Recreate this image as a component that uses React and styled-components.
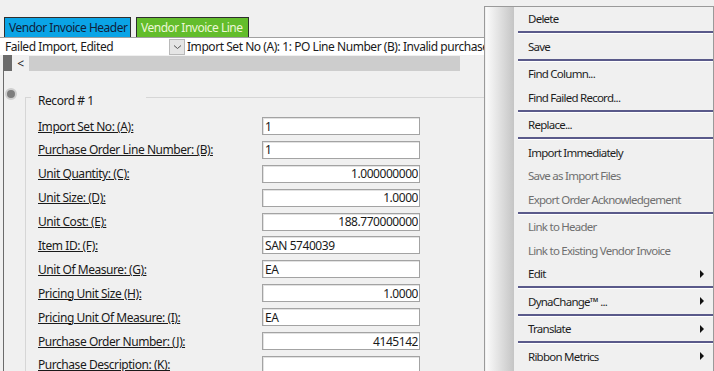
import React from "react";
import styled, { createGlobalStyle } from "styled-components";

const GlobalStyle = createGlobalStyle`
  html, body {
    margin: 0;
    padding: 0;
    background: #f0f0f0;
  }
  body {
    font-family: "Noto Sans", "Liberation Sans", sans-serif;
    font-size: 12px;
    color: #1a1a1a;
  }
`;

const Screen = styled.div`
  position: relative;
  width: 714px;
  height: 371px;
  overflow: hidden;
  letter-spacing: -0.45px;
`;

const TabStrip = styled.div`
  display: flex;
  gap: 5px;
  padding: 17px 0 0 4px;
`;

const Tab = styled.div`
  box-sizing: border-box;
  width: ${(p) => p.$width}px;
  height: 20px;
  padding-left: 4px;
  border: 1px solid #2e2e2e;
  border-bottom: none;
  background: ${(p) => p.$bg};
  color: ${(p) => p.$fg};
  font-size: 12px;
  letter-spacing: -0.5px;
  line-height: 20px;
  white-space: nowrap;
  overflow: hidden;
`;

const Panel = styled.div`
  border-top: 1px solid #a0a0a0;
`;

const FilterRow = styled.div`
  display: flex;
  align-items: center;
  height: 17px;
  padding-left: 3px;
  background: #ffffff;
`;

const Combo = styled.div`
  box-sizing: border-box;
  display: flex;
  align-items: center;
  justify-content: space-between;
  width: 182px;
  height: 17px;
  padding-left: 2px;
  background: #ffffff;
  white-space: nowrap;
`;

const ComboButton = styled.div`
  box-sizing: border-box;
  display: flex;
  align-items: center;
  justify-content: center;
  width: 16px;
  height: 16px;
  background: #e5e5e5;
  border: 1px solid #b9b9b9;
`;

const StatusText = styled.div`
  width: 297px;
  margin-left: 2px;
  white-space: nowrap;
  overflow: hidden;
`;

const ScrollRow = styled.div`
  display: flex;
  align-items: center;
  height: 16px;
  padding-left: 3px;
`;

const ScrollThumb = styled.div`
  width: 9px;
  height: 16px;
  background: #6b6b6b;
`;

const ScrollArrow = styled.div`
  width: 17px;
  text-align: center;
  font-size: 12px;
  color: #222;
`;

const ScrollTrack = styled.div`
  width: 431px;
  height: 15px;
  background: #cdcdcd;
`;

const Body = styled.div`
  display: flex;
  margin-left: 3px;
  height: 300px;
  border-left: 1px solid #6b6b6b;
`;

const RadioCol = styled.div`
  width: 21px;
`;

const Radio = styled.div`
  box-sizing: border-box;
  width: 12px;
  height: 12px;
  margin: 17px 0 0 1px;
  border-radius: 50%;
  background: #7e7e7e;
  border: 2px solid #cfcfcf;
`;

const Group = styled.div`
  flex: 1;
  margin-top: 26px;
  border-top: 1px solid #d6d6d6;
  border-left: 1px solid #d6d6d6;
`;

const GroupTitle = styled.div`
  box-sizing: border-box;
  width: 115px;
  height: 15px;
  margin: -5px 0 0 5px;
  padding-left: 7px;
  background: #f0f0f0;
  line-height: 15px;
`;

const Fields = styled.div`
  display: grid;
  grid-template-columns: 224px 158px;
  grid-auto-rows: 18px;
  row-gap: 5.9px;
  align-items: center;
  padding: 9px 0 0 12px;
`;

const FieldLabel = styled.div`
  text-decoration: underline;
  white-space: nowrap;
`;

const FieldInput = styled.input`
  box-sizing: border-box;
  width: 158px;
  height: 18px;
  padding: 0 1px 0 2px;
  border: 1px solid #a3a3a3;
  box-shadow: inset 1px 1px 0 #e2e2e2;
  background: #ffffff;
  font: inherit;
  letter-spacing: -0.45px;
  color: #1a1a1a;
  text-align: ${(p) => (p.$num ? "right" : "left")};
  outline: none;
`;

const Menu = styled.div`
  position: absolute;
  left: 484px;
  top: 6px;
  width: 228px;
  height: 380px;
  display: flex;
  border: 1px solid #9a9a9a;
  border-bottom: none;
  background: #f0f0f0;
`;

const MenuGutter = styled.div`
  width: 28px;
  margin-left: 1px;
  background: linear-gradient(to right, #fbfbfb, #c5c5c5);
`;

const MenuList = styled.div`
  flex: 1;
  display: flex;
  flex-direction: column;
`;

const MenuItem = styled.div`
  display: flex;
  align-items: center;
  justify-content: space-between;
  height: 23.5px;
  padding: 0 9px 0 14px;
  color: ${(p) => (p.$disabled ? "#6f6f6f" : "#1e1e1e")};
  font-size: 11.5px;
  letter-spacing: -0.75px;
  white-space: nowrap;
`;

const MenuSeparator = styled.div`
  height: 4px;
  margin-left: 4px;
  display: flex;
  flex-direction: column;
  justify-content: center;

  &::before {
    content: "";
    height: 2px;
    background: #5a5a8a;
  }
  &::after {
    content: "";
    height: 1px;
    background: #ffffff;
  }
`;

const SubArrow = styled.span`
  width: 0;
  height: 0;
  border-top: 4px solid transparent;
  border-bottom: 4px solid transparent;
  border-left: 4px solid #111;
`;

const fields = [
  ["Import Set No: (A):", "1", false],
  ["Purchase Order Line Number: (B):", "1", false],
  ["Unit Quantity: (C):", "1.000000000", true],
  ["Unit Size: (D):", "1.0000", true],
  ["Unit Cost: (E):", "188.770000000", true],
  ["Item ID: (F):", "SAN 5740039", false],
  ["Unit Of Measure: (G):", "EA", false],
  ["Pricing Unit Size (H):", "1.0000", true],
  ["Pricing Unit Of Measure: (I):", "EA", false],
  ["Purchase Order Number: (J):", "4145142", true],
  ["Purchase Description: (K):", "", false],
];

const menu = [
  { label: "Delete" },
  { sep: true },
  { label: "Save" },
  { sep: true },
  { label: "Find Column..." },
  { label: "Find Failed Record..." },
  { sep: true },
  { label: "Replace..." },
  { sep: true },
  { label: "Import Immediately" },
  { label: "Save as Import Files", disabled: true },
  { label: "Export Order Acknowledgement", disabled: true },
  { sep: true },
  { label: "Link to Header", disabled: true },
  { label: "Link to Existing Vendor Invoice", disabled: true },
  { label: "Edit", sub: true },
  { sep: true },
  { label: "DynaChange™ ...", sub: true },
  { sep: true },
  { label: "Translate", sub: true },
  { sep: true },
  { label: "Ribbon Metrics", sub: true },
];

export default function App() {
  return (
    <>
      <GlobalStyle />
      <Screen>
        <TabStrip>
          <Tab $width={127} $bg="#0aa4e6" $fg="#10213a">
            Vendor Invoice Header
          </Tab>
          <Tab $width={113} $bg="#63bd2c" $fg="#eef7d8">
            Vendor Invoice Line
          </Tab>
        </TabStrip>

        <Panel>
          <FilterRow>
            <Combo>
              Failed Import, Edited
              <ComboButton>
                <svg width="9" height="6" viewBox="0 0 9 6">
                  <path d="M1 1.5 L4.5 4.5 L8 1.5" fill="none" stroke="#555" strokeWidth="1" />
                </svg>
              </ComboButton>
            </Combo>
            <StatusText>Import Set No (A): 1: PO Line Number (B): Invalid purchase order line</StatusText>
          </FilterRow>

          <ScrollRow>
            <ScrollThumb />
            <ScrollArrow>&lt;</ScrollArrow>
            <ScrollTrack />
          </ScrollRow>

          <Body>
            <RadioCol>
              <Radio />
            </RadioCol>
            <Group>
              <GroupTitle>Record # 1</GroupTitle>
              <Fields>
                {fields.map(([label, value, num]) => (
                  <React.Fragment key={label}>
                    <FieldLabel>{label}</FieldLabel>
                    <FieldInput readOnly value={value} $num={num} />
                  </React.Fragment>
                ))}
              </Fields>
            </Group>
          </Body>
        </Panel>

        <Menu>
          <MenuGutter />
          <MenuList>
            {menu.map((m, i) =>
              m.sep ? (
                <MenuSeparator key={i} />
              ) : (
                <MenuItem key={i} $disabled={m.disabled}>
                  {m.label}
                  {m.sub && <SubArrow />}
                </MenuItem>
              )
            )}
          </MenuList>
        </Menu>
      </Screen>
    </>
  );
}
